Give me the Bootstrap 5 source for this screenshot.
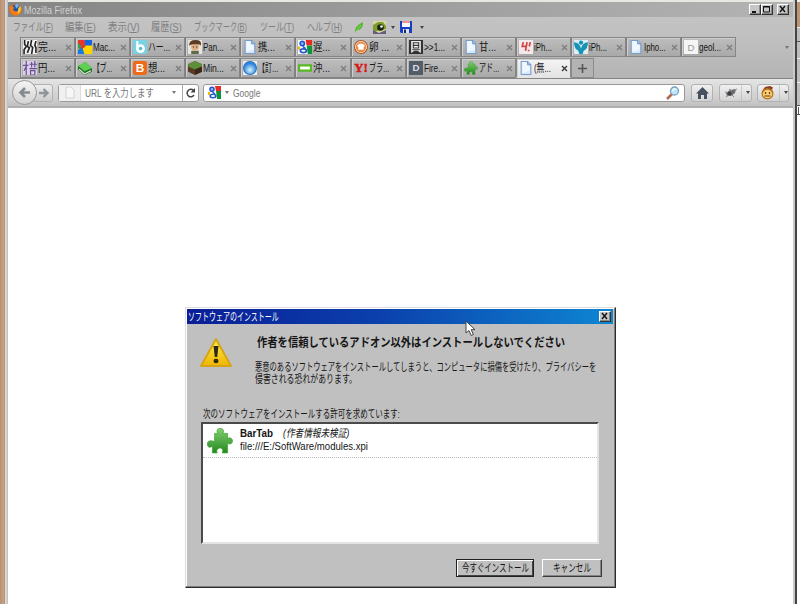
<!DOCTYPE html>
<html lang="ja">
<head>
<meta charset="utf-8">
<title>Mozilla Firefox</title>
<link rel="stylesheet" href="https://cdn.jsdelivr.net/npm/bootstrap@5.3.0/dist/css/bootstrap.min.css">
<style>
html,body{height:100%}
body{margin:0;width:800px;height:604px;overflow:hidden;font:11px/12px "Liberation Sans","Noto Sans CJK JP",sans-serif;color:#151515;background:#fff}
svg{display:block;flex:none}
.fit{display:inline-block;white-space:nowrap;transform-origin:0 50%;flex:none}
.desk{width:5px;background:linear-gradient(90deg,#b98f72,#c5a286 70%,#a98a74)}
.edge{width:3px;background:linear-gradient(90deg,#e3e1dc,#d0cfcc 60%,#b8b8b8)}
.frame{width:785px}
.topedge{height:2px;background:#e9e7e2}
.titlebar{height:15px;background:linear-gradient(90deg,#858585,#b4b4b4);color:#d0d0d0;padding-left:1px}
.caption{margin-left:2px}
.winbtn{width:12px;height:11px;background:#c6c6c6;border:1px solid;border-color:#fff #333 #333 #fff;box-shadow:inset -1px -1px #888}
.menus{height:20px;background:linear-gradient(#c3c3c3,#c0c0c0);color:#808080;padding-left:5px}
.tabs{height:42px;background:linear-gradient(#c0c0c0,#b4b4b4);padding-left:12px;border-bottom:1px solid #858585}
.tabline{height:20px;margin-bottom:1px}
.tb{width:55.1px;height:20px;border:1px solid #858585;border-left-color:#7e7e7e;background:linear-gradient(#bdbdbd,#a9a9a9);box-shadow:inset 1px 1px #cfcfcf;padding-left:2px}
.tb svg.fav{width:14px;height:14px;margin-right:1px}
.tb .lbl{width:27px}
.tb.on{background:linear-gradient(#f4f4f4,#e4e4e4);border-color:#999 #888 #e4e4e4}
.plus{width:23px;height:20px;border:1px solid #8b8b8b;background:#b3b3b3}
.toolbar-ff{height:29px;background:linear-gradient(#e4e4e4,#cfcfcf 70%,#c1c1c1);border-bottom:2px solid #b0b0b0;padding-left:4px}
.back{width:25px;height:25px;border:1px solid #999;border-radius:50%;background:linear-gradient(#f5f5f5,#d2d2d2);z-index:1}
.fwd{width:19px;height:18px;border:1px solid #b0b0b0;border-radius:0 3px 3px 0;background:linear-gradient(#eee,#ccc);margin-left:-3px}
.box{height:18px;border:1px solid #999;border-radius:3px;background:#fff;color:#777}
.ident{width:22px;height:16px;background:#f0f0f0;border-right:1px solid #ddd}
.tbtn{height:18px;border:1px solid #b2b2b2;border-radius:3px;background:linear-gradient(#f0f0f0,#d2d2d2)}
.arr{width:0;height:0;border:2.5px solid transparent;border-top:3px solid #444;border-bottom:0}
.arrg{border-top-color:#777}
#url{width:141px;margin-left:5px}
#search{width:482px;margin-left:4px}
.home{width:22px;margin-left:6px}
.duo{width:33px;margin-left:6px}
.duo+.duo{width:32px;margin-left:5px}
.rbar{width:4px;background:linear-gradient(90deg,#c8c8c8 45%,#444 50%,#444)}
.rdesk{width:3px;background:#fff}
.dlg{left:185px;top:307px;width:431px;height:281px;background:#c0c0c0;border:1px solid;border-color:#dcdcdc #2c2c2c #2c2c2c #dcdcdc;box-shadow:inset -1px -1px #808080,inset 1px 1px #fff;padding:1px 2px 2px 1px}
.dtitle{height:15px;background:linear-gradient(90deg,#0a1e96,#0b40ac 45%,#0e86d2);color:#fff;padding:0 2px 0 1px}
.top-part{height:84px;padding:13px 0 0 12px}
.msg{margin-left:22px;padding-top:0}
.head{margin:0 0 12px 2px;font-size:12px}
.ask{height:14px;padding-left:16px}
.lst{width:398px;height:122px;background:#fff;border:2px solid;border-color:#4a4a4a #e4e4e4 #e4e4e4 #4a4a4a;margin-left:14px}
.ritem{height:34px;border-bottom:1px dotted #bbb;padding:0 0 0 4px}
.rt{margin-left:7px;padding-bottom:1px}
.rt div{line-height:13px}
.foot{margin-top:15px;padding-right:11px}
.wbtn{height:18px;border:1px solid;border-color:#fff #3b3b3b #3b3b3b #fff;box-shadow:inset -1px -1px #858585;background:#c0c0c0}
.wbtn.def{width:78px;border:1px solid #222;box-shadow:inset 1px 1px #fff,inset -1px -1px #444}
.can{width:60px;margin-left:8px}
.cursor{left:465px;top:320px}
</style>
</head>
<body>
<svg class="position-absolute" width="0" height="0"><defs>
<linearGradient id="gy" x2="0" y2="1"><stop stop-color="#fff04c"/><stop offset="1" stop-color="#f0b400"/></linearGradient>
<linearGradient id="gg" x2="0" y2="1"><stop stop-color="#83cf70"/><stop offset="1" stop-color="#23891f"/></linearGradient>
<radialGradient id="gb" cy=".65"><stop stop-color="#d8f4ff"/><stop offset="1" stop-color="#2f86dc"/></radialGradient>
<symbol id="puzzle" viewBox="0 0 24 24"><path d="M7 8V5h3C8 1.500 10.500 0 13 .5s3 3 1.500 4.500H19v5c2-2 4.500-.5 4.500 2s-2.500 3.500-4.500 2V23h-5c1.500-3-.5-4.500-2-4.500S8 20.500 9.500 23H5v-6C1 19 .3 16.500.3 14.500.3 12 3 11 7 12.500Z" fill="url(#gg)" stroke="#43a137" stroke-width=".7"/></symbol>
<symbol id="page" viewBox="0 0 13 13"><path d="M2 .5h6l3 3v9H2z" fill="#d6eaff" stroke="#7a9cc8"/><path d="M3 1h4v3l3 1v4L3 11z" fill="#f0f7ff"/><path d="M8 .5v3h3" fill="#9cc3ec" stroke="#6289b8" stroke-width=".7"/></symbol>
<symbol id="goog" viewBox="0 0 13 13"><path fill="#fff" d="M0 0h13v13H0z"/><path fill="#e82c25" d="M7 0h6v5H8z"/><path fill="#0d9637" d="M8 5h5v8H9z"/><path fill="#f0b800" d="M0 6h2v3H0z"/><circle cx="4" cy="3.300" r="2" fill="#9db9f5" stroke="#2458cf" stroke-width="1.600"/><path d="M4.500 6L7 8" stroke="#2458cf" stroke-width="1.500"/><ellipse cx="5" cy="10" rx="2.800" ry="1.700" fill="#fff" stroke="#2458cf" stroke-width="1.600"/></symbol>
</defs></svg>
<main class="d-flex h-100">
<div class="desk"></div><div class="edge"></div>
<div class="frame d-flex flex-column">
 <div class="topedge"></div>
 <header class="titlebar d-flex align-items-center">
  <svg width="13" height="13" viewBox="0 0 14 14"><circle cx="7" cy="7" r="6.500" fill="#e66a13"/><circle cx="7.800" cy="5.500" r="4.200" fill="#2456a6"/><path d="M6 2q4-2 5 1L8 6z" fill="#6fb8ec"/><path d="M1 3l3 1 2 1-2 2 2 2 4 0 3-5q2 8-5 9.500Q0 13 1 3z" fill="#f47b16"/><path d="M12 3q2 6-3 9 1-4 1-6z" fill="#ffd03a"/></svg>
  <span class="fit caption" data-w="58">Mozilla Firefox</span>
  <div class="ms-auto d-flex pe-1">
   <div class="winbtn"><svg width="10" height="9"><path d="M2 7h4" stroke="#111" stroke-width="2"/></svg></div>
   <div class="winbtn"><svg width="10" height="9"><path d="M1.500 1.500h6v5.500h-6zM1 2h7" stroke="#111" fill="none"/></svg></div>
   <div class="winbtn ms-1"><svg width="10" height="9"><path d="M2 1l5 6M7 1l-5 6" stroke="#111" stroke-width="1.400"/></svg></div>
  </div>
 </header>
 <nav class="menus d-flex align-items-center">
  <span class="fit" data-w="40" data-gap="12">ファイル(<u>F</u>)</span><span class="fit" data-w="31" data-gap="12">編集(<u>E</u>)</span><span class="fit" data-w="32" data-gap="12">表示(<u>V</u>)</span><span class="fit" data-w="31" data-gap="12">履歴(<u>S</u>)</span><span class="fit" data-w="53" data-gap="13">ブックマーク(<u>B</u>)</span><span class="fit" data-w="34" data-gap="13">ツール(<u>T</u>)</span><span class="fit" data-w="35" data-gap="12">ヘルプ(<u>H</u>)</span>
  <svg width="11" height="13"><path d="M1 12Q0 5 9 1q1 7-7 9z" fill="#57b92f"/><path d="M3 9Q4 5 8 3l-2 5z" fill="#57b92f"/><path d="M1 12L7 4" stroke="#a4da7c" stroke-width=".7"/></svg>
  <svg class="ms-2" width="14" height="13"><path d="M0 0h13v13H0z" fill="#dad9a0"/><path d="M0 4L5 1h5l3 4v3L0 11z" fill="#7c9d2c"/><circle cx="7.500" cy="6.500" r="3.300" fill="#1b2413"/><circle cx="8.500" cy="5.500" r="1.300" fill="#fff"/><path d="M0 13V9l6 3 7-3v4z" fill="#6a5c7c"/></svg>
  <i class="arr ms-1"></i>
  <svg class="ms-1" width="13" height="12"><path d="M1 0h12v12H2L1 11z" fill="#173fc1"/><path d="M3 0h8v6H3z" fill="#f5f7fa"/><path d="M3 1h8" stroke="#d33"/><path d="M4 8h6v4H4z" fill="#dce1ed"/><path d="M5 8.500h2V12H5z" fill="#122a71"/></svg>
  <i class="arr ms-2"></i>
 </nav>
 <div class="tabs">
  <div class="tabline d-flex" id="row1"></div>
  <div class="tabline d-flex" id="row2"></div>
 </div>
 <div class="toolbar-ff d-flex align-items-center">
  <div class="back d-flex align-items-center justify-content-center"><svg width="15" height="15"><path d="M13 7.500H3M8 3L3.500 7.500 8 12" fill="none" stroke="#858a90" stroke-width="2.600"/></svg></div>
  <div class="fwd d-flex align-items-center justify-content-center"><svg width="12" height="12"><path d="M1 6h8M5.500 2L9.500 6l-4 4" fill="none" stroke="#8f9499" stroke-width="2.400"/></svg></div>
  <div class="box d-flex align-items-center" id="url">
   <div class="ident d-flex justify-content-center align-items-center"><svg width="10" height="13"><path d="M1 1h5l3 3v8H1z" fill="#f7f7f7" stroke="#d3d3d3"/></svg></div>
   <span class="fit ms-1" data-w="69" data-gap="18">URL を入力します</span><i class="arr arrg"></i>
   <svg class="ms-auto" width="16" height="16"><path d="M.5 0v16" stroke="#aaa"/><path d="M11.500 5.500A3.700 3.700 0 1 0 12 10" fill="none" stroke="#444" stroke-width="1.500"/><path d="M13 3v4.500H8.500z" fill="#444"/></svg>
  </div>
  <div class="box d-flex align-items-center" id="search">
   <svg class="ms-1" width="13" height="13"><use href="#goog"/></svg><i class="arr arrg ms-1"></i><span class="fit ms-1" data-w="27">Google</span>
   <svg class="ms-auto me-1" width="14" height="14"><path d="M1 13l5-5" stroke="#b56b49" stroke-width="2.600"/><circle cx="8.500" cy="5" r="4" fill="#bfe7fb" stroke="#7b9fbc" stroke-width="1.300"/><path d="M6 5q1-3 4-2" stroke="#fff" fill="none"/></svg>
  </div>
  <div class="tbtn home d-flex justify-content-center align-items-center"><svg width="13" height="12"><path d="M6.500 0L0 6.500h2V12h3V8h3v4h3V6.500h2z" fill="#46515f"/></svg></div>
  <div class="tbtn duo d-flex align-items-center"><svg width="22" height="16"><path d="M6 8l4-3 6-1-1 4-4 3-4 0z" fill="#6a6c6f"/><path d="M5 7l4 1M6 12l3-2M14 5l3-1M9 4l3 2M12 10l2 2" stroke="#888"/><circle cx="9.500" cy="8.500" r="2" fill="#3d3f41"/><path d="M22 0v16" stroke="#aaa"/></svg><i class="arr ms-1"></i></div>
  <div class="tbtn duo d-flex align-items-center"><svg width="22" height="16"><circle cx="9.500" cy="8.500" r="6" fill="#b56d1d"/><ellipse cx="9.500" cy="9" rx="4.800" ry="4.300" fill="#f6cf70"/><path d="M5 4.500q4-3 9 0l1-2-3-1.500-5 1z" fill="#8d3b18"/><path d="M7.500 7v2M11.500 7v2M6.500 11h6" stroke="#6f3b10" stroke-width="1.200"/><path d="M22 0v16" stroke="#aaa"/></svg><i class="arr ms-1"></i></div>
 </div>
 <div class="flex-grow-1 bg-white"></div>
</div>
<div class="rbar"></div>
<div class="rdesk"><svg width="3" height="116"><path d="M0 0h3v2H0z" fill="#eee"/><path d="M0 2h3v25H0z" fill="#bd9673"/><path d="M0 27h3v78H0z" fill="#bdbdbd"/><path d="M0 27.500h3M0 58.500h3M0 82.500h3" stroke="#eee"/><path d="M0 41.500h3M0 105.500h3M1.500 107v7M0 114.500h3" stroke="#555"/></svg></div>
</main>

<section class="dlg position-absolute" role="dialog">
 <div class="dtitle d-flex align-items-center"><span class="fit" data-w="91">ソフトウェアのインストール</span>
  <div class="winbtn ms-auto"><svg width="10" height="9"><path d="M2 1l5 6M7 1l-5 6" stroke="#111" stroke-width="1.400"/></svg></div></div>
 <div class="d-flex top-part">
  <svg width="34" height="31" viewBox="0 0 34 31"><path d="M17 2L32 29H2z" fill="url(#gy)" stroke="#d6a516" stroke-width="2" stroke-linejoin="round"/><path d="M14.500 9h5l-1.300 11h-2.400z" fill="#2e2a16"/><ellipse cx="17" cy="24" rx="2.500" ry="2.200" fill="#2e2a16"/></svg>
  <div class="msg"><div class="head"><b class="fit" data-w="308">作者を信頼しているアドオン以外はインストールしないでください</b></div>
   <div><span class="fit" data-w="341">悪意のあるソフトウェアをインストールしてしまうと、コンピュータに損傷を受けたり、プライバシーを</span></div>
   <div><span class="fit" data-w="102">侵害される恐れがあります。</span></div></div>
 </div>
 <div class="ask"><span class="fit" data-w="197">次のソフトウェアをインストールする許可を求めています:</span></div>
 <div class="lst"><div class="ritem d-flex align-items-center"><svg width="26" height="26"><use href="#puzzle"/></svg>
  <div class="rt"><div class="d-flex"><b class="fit" data-w="33" data-gap="10">BarTab</b><em class="fit" data-w="66">(作者情報未検証)</em></div><div><span class="fit" data-w="128">file:///E:/SoftWare/modules.xpi</span></div></div></div></div>
 <div class="d-flex justify-content-end foot"><div class="wbtn def d-flex align-items-center justify-content-center"><span class="fit" data-w="67">今すぐインストール</span></div><div class="wbtn can d-flex align-items-center justify-content-center"><span class="fit" data-w="38">キャンセル</span></div></div>
</section>
<svg class="cursor position-absolute" width="12" height="18"><path d="M1 1v12l3-2.500 2.200 5 2.200-1L6.200 9.700H10z" fill="#fff" stroke="#444"/></svg>

<script src="https://cdn.jsdelivr.net/npm/bootstrap@5.3.0/dist/js/bootstrap.bundle.min.js"></script>
<script>
const bg=c=>`<path d="M0 0h13v13H0z" fill="${c}"/>`;
const use=id=>`<use href="#${id}"/>`;
const rows={
row1:[
 ['完...',18,bg('#f3f3f3')+'<path d="M1.500 0v4l1.500 2-2 3v4M5 1L4 6l2 1-2 5M8 0L7 5l2 2-1 6M12 1l-1 4 1 2v5" stroke="#222" stroke-width="1.500" fill="none"/>'],
 ['Mac...',22,'<path d="M0 0h6v7H0z" fill="#eb332b"/><path d="M6 0h7v6H6z" fill="#1265df"/><path d="M0 8l6-3 7 0v8H0z" fill="#ffd500"/><path d="M6 0l1 6-4 3-3-2z" fill="#e5372c"/><path d="M0 9l4-2 2 6H0z" fill="#1879e5"/><path d="M0 3l3 2-1 3-2 0z" fill="#24a84b"/>'],
 ['ハー...',22,bg('#77d3e4')+'<circle cx="7" cy="8" r="4" fill="#fff"/><path d="M4 1v9" stroke="#fff" stroke-width="2"/><circle cx="7" cy="8" r="1.700" fill="#57bfd3"/>'],
 ['Pan...',21,bg('#e4e4e0')+'<path d="M3 13v-3h7v3z" fill="#5e6a48"/><circle cx="6.500" cy="6" r="3.700" fill="#e2ae80"/><path d="M1 5q0-5 6-5t5 5l-2-1H4z" fill="#5b3c28"/><path d="M5 6v1M8 6v1" stroke="#222"/>'],
 ['携...',17,use('page')],
 ['遅...',17,use('goog')],
 ['卵 ...',20,'<circle cx="6.500" cy="6.500" r="6" fill="#f6efe8" stroke="#b0561f"/><circle cx="6.500" cy="6.500" r="4.800" fill="#e9863b"/><path d="M4 9V7q-2-2 .5-3 2-1.500 4 0Q11 5 9 7v2z" fill="#fff"/>'],
 ['>>1...',21,bg('#333')+'<path d="M2 1h9v11l-3-2H5l-3 2z" fill="#eee"/><path d="M4 2.500h5v5H4zM4 5h5M3 9h7" fill="none" stroke="#333"/>'],
 ['甘...',17,use('page')],
 ['iPh...',18,bg('#f2eaea')+'<path d="M4 2L3 6h3M7.500 2L6 10M10.500 2L9.500 6M9 9v1.500" stroke="#d74343" stroke-width="1.600" fill="none"/>'],
 ['iPh...',18,bg('#ddeff4')+'<circle cx="6.500" cy="2.500" r="2" fill="#1892b5"/><path d="M0 2q5 0 6.500 6Q8 2 13 2q0 6-4 8l-1 3H5l-1-3Q0 8 0 2z" fill="#1892b5"/>'],
 ['Ipho...',22,use('page')],
 ['geol...',22,bg('#f5f5f5')+'<text x="6.500" y="10" text-anchor="middle" font-size="9" fill="#999">D</text>']],
row2:[
 ['円...',17,bg('#d9d1e6')+'<path d="M3 0v13M0 4h5M1 9l2-4M8 1v5M11 0v6M6 3h7M6 7h7M7 9h4v4H7z" stroke="#684e92" stroke-width="1.100" fill="none"/>'],
 ['【ブ...',19,'<path d="M0 5l7-4 6 6v3l-7 3-6-5z" fill="#21762a"/><path d="M0 4.500L7 1l6 5.500-7 3z" fill="#5fd052"/><path d="M1 7.500L6 12l6-3" stroke="#e3f1dc" fill="none"/>'],
 ['想...',17,'<rect width="13" height="13" rx="2" fill="#ef6a18"/><text x="6.500" y="10.500" text-anchor="middle" font-size="11" font-weight="bold" fill="#fff">B</text>'],
 ['Min...',21,'<path d="M0 3l6.500-3L13 3v7l-6.500 3L0 10z" fill="#5a3a24"/><path d="M0 3l6.500-3L13 3v2L6.500 8 0 5z" fill="#5c8f3a"/><path d="M6.500 8L13 5v5l-6.500 3z" fill="#3c281b"/>'],
 ['【訂...',20,bg('#e9eef4')+'<circle cx="6.500" cy="6.500" r="6" fill="url(#gb)" stroke="#2d74bd"/>'],
 ['沖...',17,'<path d="M1 4h11v5H1z" fill="#fff" stroke="#58b825" stroke-width="2"/>'],
 ['ブラ...',20,'<text x="0" y="10.500" font-family="Liberation Serif" font-size="11" font-weight="bold" fill="#dc1616" stroke="#dc1616" stroke-width=".4" textLength="13" lengthAdjust="spacingAndGlyphs">Y!</text>'],
 ['Fire...',21,bg('#545c6a')+'<text x="6.500" y="9.700" text-anchor="middle" font-size="9" font-weight="bold" fill="#d8dce5">D</text>'],
 ['アド...',20,use('puzzle')],
 ['(無...',17,use('page'),1]]};
for(const id in rows){
 document.getElementById(id).innerHTML=rows[id].map(([t,w,s,on])=>`<div class="tb flex-shrink-0 d-flex align-items-center ${on?'on':''}"><svg class="fav" viewBox="0 0 13 13">${s}</svg><div class="lbl"><span class="fit" data-w="${w}">${t}</span></div><svg width="7" height="7"><path d="M1 1l5 5M6 1L1 6" stroke="${on?'#333':'#7d7d7d'}" stroke-width="1.300"/></svg></div>`).join('')
 +(id==='row2'?'<div class="plus d-flex align-items-center justify-content-center"><svg width="9" height="9"><path d="M4.500 0v9M0 4.500h9" stroke="#555" stroke-width="1.600"/></svg></div>':'<div class="ms-auto pe-1 d-flex align-items-center"><i class="arr arrg"></i></div>');
}
/* squeeze each label horizontally to its data-w width */
document.querySelectorAll('.fit').forEach(e=>{
 const n=e.offsetWidth,w=+e.dataset.w;
 e.style.transform=`scaleX(${w/n})`;
 e.style.marginRight=(w-n+(+e.dataset.gap||0))+'px';
});
</script>
</body>
</html>
